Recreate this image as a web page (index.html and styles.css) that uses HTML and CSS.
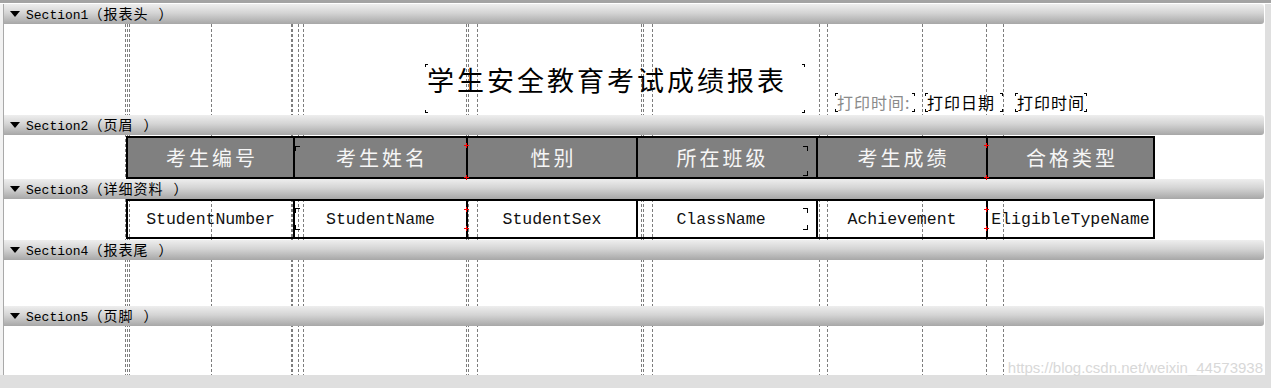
FILE: index.html
```html
<!DOCTYPE html>
<html lang="zh-CN">
<head>
<meta charset="utf-8">
<title>报表设计</title>
<link rel="stylesheet" href="styles.css">
</head>
<body>
<div class="window">
  <div class="topline"></div>
  <div class="main">
    <div class="edge"></div>
    <div class="surface">
      <div class="bar"><svg class="tri" width="10" height="6" viewBox="0 0 10 6"><path d="M0 0H10L5 6Z"/></svg><span class="label">Section1<span class="zh">（报表头 ）</span></span></div>
      <div class="body body-1">
        <div class="title marks">学生安全教育考试成绩报表</div>
        <div class="stamps">
          <div class="stamp marks caption">打印时间:</div>
          <div class="stamp marks date">打印日期</div>
          <div class="stamp marks time">打印时间</div>
        </div>
      </div>

      <div class="bar"><svg class="tri" width="10" height="6" viewBox="0 0 10 6"><path d="M0 0H10L5 6Z"/></svg><span class="label">Section2<span class="zh">（页眉 ）</span></span></div>
      <div class="body body-2">
        <div class="grid head">
          <div class="cell">考生编号</div>
          <div class="cell bl">考生姓名</div>
          <div class="cell red">性别</div>
          <div class="cell br narrow">所在班级</div>
          <div class="cell">考生成绩</div>
          <div class="cell red">合格类型</div>
        </div>
      </div>

      <div class="bar"><svg class="tri" width="10" height="6" viewBox="0 0 10 6"><path d="M0 0H10L5 6Z"/></svg><span class="label">Section3<span class="zh">（详细资料 ）</span></span></div>
      <div class="body body-3">
        <div class="grid detail">
          <div class="cell">StudentNumber</div>
          <div class="cell bl">StudentName</div>
          <div class="cell red">StudentSex</div>
          <div class="cell br narrow">ClassName</div>
          <div class="cell">Achievement</div>
          <div class="cell red">EligibleTypeName</div>
        </div>
      </div>

      <div class="bar"><svg class="tri" width="10" height="6" viewBox="0 0 10 6"><path d="M0 0H10L5 6Z"/></svg><span class="label">Section4<span class="zh">（报表尾 ）</span></span></div>
      <div class="body body-4"></div>

      <div class="bar"><svg class="tri" width="10" height="6" viewBox="0 0 10 6"><path d="M0 0H10L5 6Z"/></svg><span class="label">Section5<span class="zh">（页脚 ）</span></span></div>
      <div class="body body-5"></div>
    </div>
    <div class="vstrip"></div>
  </div>
  <div class="hstrip"></div>
  <div class="watermark">https://blog.csdn.net/weixin_44573938</div>
</div>
</body>
</html>
```
FILE: styles.css
```css
* { box-sizing: border-box; }

html, body {
  margin: 0;
  padding: 0;
  background: #ffffff;
}

.window {
  position: relative;
  width: 1271px;
  height: 388px;
  display: flex;
  flex-direction: column;
  overflow: hidden;
  font-family: "Liberation Mono", "Noto Sans CJK SC", monospace;
}

.topline {
  height: 4px;
  flex: none;
  border-top: 3px solid #a3a3a3;
  background: #ffffff;
}

.main {
  flex: 1;
  display: flex;
  min-height: 0;
}

.edge {
  width: 4px;
  flex: none;
  background: #f2f2f2;
  border-right: 1px solid #a9a9a9;
}

.vstrip {
  width: 6px;
  flex: none;
  background: #dfdfdf;
}

.hstrip {
  height: 13px;
  flex: none;
  background: #dfdfdf;
}

.surface {
  --dash: repeating-linear-gradient(to bottom, #7d7d7d 0 3px, transparent 3px 5px);
  flex: 1;
  display: flex;
  flex-direction: column;
  background-color: #ffffff;
  background-image:
    var(--dash), var(--dash), var(--dash), var(--dash), var(--dash),
    var(--dash), var(--dash), var(--dash), var(--dash), var(--dash),
    var(--dash), var(--dash), var(--dash), var(--dash), var(--dash),
    var(--dash), var(--dash), var(--dash), var(--dash);
  background-size: 1px 100%;
  background-repeat: no-repeat;
  background-position:
    121px 0, 123px 0, 125px 0, 207px 0, 287px 0,
    288px 0, 294px 0, 299px 0, 462px 0, 464px 0,
    473px 0, 637px 0, 639px 0, 648px 0, 815px 0,
    823px 0, 918px 0, 982px 0, 999px 0;
}

/* section header bars */
.bar {
  height: 20px;
  flex: none;
  margin-right: 1px;
  display: flex;
  align-items: center;
  padding-left: 6px;
  gap: 6px;
  background: linear-gradient(to bottom, #eeeeee 0%, #d4d4d4 45%, #a7a7a7 100%);
  border-radius: 0 3px 3px 0;
  color: #000000;
  font-size: 13px;
  line-height: 20px;
}

.tri { display: block; fill: #000000; }

.label { white-space: pre; }
.label .zh {
  font-family: "Noto Sans CJK SC", sans-serif;
  font-size: 14px;
  letter-spacing: 1px;
  word-spacing: 6px;
}

/* section bodies */
.body { flex: none; }
.body-1 {
  height: 91px;
  display: flex;
  align-items: flex-end;
  padding-left: 421px;
  padding-bottom: 2px;
}
.body-2 { height: 44px; padding-top: 1px; padding-left: 122px; }
.body-3 { height: 41px; padding-left: 122px; }
.body-4 { height: 46px; }
.body-5 { height: 49px; }

/* corner marks of report controls */
.marks {
  --m: #000000;
  background:
    linear-gradient(var(--m), var(--m)) left top / 3px 1px no-repeat,
    linear-gradient(var(--m), var(--m)) left top / 1px 3px no-repeat,
    linear-gradient(var(--m), var(--m)) right top / 3px 1px no-repeat,
    linear-gradient(var(--m), var(--m)) right top / 1px 3px no-repeat,
    linear-gradient(var(--m), var(--m)) left bottom / 3px 1px no-repeat,
    linear-gradient(var(--m), var(--m)) left bottom / 1px 3px no-repeat,
    linear-gradient(var(--m), var(--m)) right bottom / 3px 1px no-repeat,
    linear-gradient(var(--m), var(--m)) right bottom / 1px 3px no-repeat;
}

.title {
  width: 380px;
  height: 49px;
  padding: 1px 0 0 2px;
  font-family: "Noto Sans CJK SC", sans-serif;
  font-size: 27px;
  letter-spacing: 3px;
  line-height: 30px;
  color: #000000;
  white-space: nowrap;
}

.stamps {
  display: flex;
  margin-left: 30px;
  margin-bottom: 1px;
}

.stamp {
  height: 19px;
  padding-left: 2px;
  font-family: "Noto Sans CJK SC", sans-serif;
  font-size: 16px;
  letter-spacing: 1px;
  line-height: 19px;
  color: #000000;
  white-space: nowrap;
}
.stamp.caption { width: 80px; color: #8a8a8a; }
.stamp.date { width: 78px; margin-left: 10px; }
.stamp.time { width: 72px; margin-left: 12px; }

/* table rows */
.grid {
  display: grid;
  grid-template-columns: 167px 173px 170px 180px 170px 167px;
  width: 1029px;
  border: 2px solid #000000;
  border-left: none;
}

.cell {
  position: relative;
  display: flex;
  align-items: center;
  justify-content: center;
  border-left: 2px solid #000000;
  white-space: nowrap;
}
.cell.narrow { padding-right: 12px; }

.head { height: 43px; }
.head .cell {
  background: #808080;
  color: #f6f6f6;
  font-family: "Noto Sans CJK SC", sans-serif;
  font-size: 20px;
  letter-spacing: 3px;
  padding-left: 3px;
}
.head .cell.narrow { padding-right: 12px; }

.detail { height: 40px; }
.detail .cell {
  background: transparent;
  color: #111111;
  font-family: "Liberation Mono", monospace;
  font-size: 16.5px;
}

/* red anchor crosses on the left border */
.cell.red::before,
.cell.red::after {
  content: "";
  position: absolute;
  left: -4px;
  width: 5px;
  height: 5px;
  background:
    linear-gradient(#ff0000, #ff0000) center / 5px 1px no-repeat,
    linear-gradient(#ff0000, #ff0000) center / 1px 5px no-repeat;
}
.head .cell.red::before { top: 5px; }
.head .cell.red::after { bottom: -3px; }
.detail .cell.red::before { top: 6px; }
.detail .cell.red::after { bottom: 6px; }

/* black selection brackets */
.cell.bl::before,
.cell.bl::after,
.cell.br::before,
.cell.br::after {
  content: "";
  position: absolute;
  width: 4px;
  height: 4px;
  border: 0 solid #000000;
}
.cell.bl::before { left: 0; border-left-width: 1px; border-top-width: 1px; }
.cell.bl::after { left: 0; border-left-width: 1px; border-bottom-width: 1px; }
.cell.br::before { left: 165px; border-right-width: 1px; border-top-width: 1px; }
.cell.br::after { left: 165px; border-right-width: 1px; border-bottom-width: 1px; }

.head .cell.bl::before, .head .cell.br::before { top: 8px; }
.head .cell.bl::after { display: none; }
.head .cell.br::after { bottom: 1px; }
.detail .cell.bl::before, .detail .cell.br::before { top: 7px; }
.detail .cell.bl::after, .detail .cell.br::after { bottom: 7px; }

/* watermark */
.watermark {
  position: absolute;
  right: 8px;
  bottom: 12px;
  font-family: "Liberation Sans", Arial, sans-serif;
  font-size: 15px;
  line-height: 16px;
  color: #d8d8d8;
  white-space: nowrap;
}
```
